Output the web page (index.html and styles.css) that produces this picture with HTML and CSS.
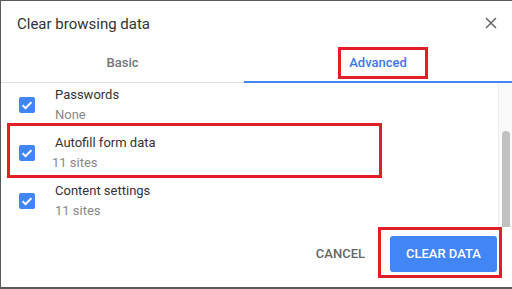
FILE: index.html
```html
<!DOCTYPE html>
<html lang="en">
<head>
<meta charset="utf-8">
<title>Clear browsing data</title>
<link rel="stylesheet" href="styles.css">
</head>
<body>
<div class="dialog">
  <header class="head">
    <h1 class="title">Clear browsing data</h1>
    <button class="close" aria-label="Close">
      <svg width="12" height="12" viewBox="0 0 12 12"><path d="M1 1L11 11M11 1L1 11" stroke="#666" stroke-width="1.5" fill="none"/></svg>
    </button>
  </header>
  <nav class="tabs">
    <div class="tab">Basic</div>
    <div class="tab tab-active"><span class="tab-label">Advanced</span></div>
  </nav>
  <div class="body">
    <ul class="list">
      <li class="row">
        <span class="check"><svg width="16" height="16" viewBox="0 0 16 16"><path d="M3.6 8.3L6.5 11.1L12.4 5.2" stroke="#fff" stroke-width="2" fill="none"/></svg></span>
        <div class="text"><div class="label">Passwords</div><div class="sub">None</div></div>
      </li>
      <li class="row row-marked">
        <span class="check"><svg width="16" height="16" viewBox="0 0 16 16"><path d="M3.6 8.3L6.5 11.1L12.4 5.2" stroke="#fff" stroke-width="2" fill="none"/></svg></span>
        <div class="text"><div class="label">Autofill form data</div><div class="sub sub-shift">11 sites</div></div>
      </li>
      <li class="row">
        <span class="check"><svg width="16" height="16" viewBox="0 0 16 16"><path d="M3.6 8.3L6.5 11.1L12.4 5.2" stroke="#fff" stroke-width="2" fill="none"/></svg></span>
        <div class="text"><div class="label">Content settings</div><div class="sub">11 sites</div></div>
      </li>
    </ul>
    <div class="scrollbar"><div class="thumb"></div></div>
  </div>
  <footer class="foot">
    <button class="btn btn-text">CANCEL</button>
    <button class="btn btn-primary">CLEAR DATA</button>
  </footer>
</div>
</body>
</html>
```
FILE: styles.css
```css
html, body {
  margin: 0;
  height: 100%;
}
body {
  background: #5a5a5a;
  font-family: Roboto, "Liberation Sans", sans-serif;
  overflow: hidden;
}
.dialog {
  margin: 1px 0 0 1px;
  height: 286px;
  background: #fff;
  display: flex;
  flex-direction: column;
}
.head {
  display: flex;
  align-items: center;
  justify-content: space-between;
  padding: 13px 15px 9px 16px;
  height: 20px;
}
.title {
  margin: 0;
  font-size: 15px;
  font-weight: 400;
  line-height: 20px;
  color: #333;
}
.close {
  border: 0;
  background: none;
  padding: 0;
  width: 12px;
  height: 12px;
  margin-top: -2px;
  display: flex;
}
.tabs {
  display: grid;
  grid-template-columns: 243px 1fr;
}
.tab {
  font-size: 13px;
  font-weight: 500;
  line-height: 16px;
  text-align: center;
  padding: 12px 0 11px;
  border-bottom: 1px solid #e0e0e0;
  color: #757575;
}
.tab-active {
  padding-bottom: 10px;
  border-bottom: 2px solid #4285f4;
  color: #3b78e7;
}
.tab-label {
  position: relative;
  display: inline-block;
}
.tab-label::after {
  content: "";
  position: absolute;
  left: -11px;
  right: -21px;
  top: -8px;
  bottom: -8px;
  border: 3px solid #e41e26;
}
.body {
  display: flex;
  height: 144px;
  overflow: hidden;
}
.list {
  flex: 1;
  list-style: none;
  margin: -2px 0 0;
  padding: 0;
}
.row {
  display: flex;
  align-items: center;
  gap: 20px;
  padding: 4px 0 4px 18px;
  position: relative;
}
.row-marked::after {
  content: "";
  position: absolute;
  left: 6px;
  top: -6px;
  width: 375px;
  height: 55px;
  box-sizing: border-box;
  border: 3px solid #e41e26;
}
.check {
  width: 16px;
  height: 16px;
  border-radius: 2px;
  background: #4285f4;
  display: flex;
  flex-shrink: 0;
}
.label {
  font-size: 13px;
  line-height: 20px;
  color: #333;
}
.sub {
  font-size: 13px;
  line-height: 20px;
  color: #888;
}
.sub-shift {
  margin-left: -3px;
}
.scrollbar {
  box-sizing: border-box;
  width: 14px;
  border-left: 1px solid #ececec;
  background: #fafafa;
  display: flex;
  flex-direction: column;
  justify-content: flex-end;
  padding: 0 2px 0 3px;
}
.thumb {
  height: 96px;
  background: #c1c1c1;
  border-radius: 4px 4px 0 0;
}
.foot {
  display: flex;
  justify-content: flex-end;
  align-items: flex-start;
  padding: 9px 15px 0 0;
  flex: 1;
}
.btn {
  font-family: Roboto, "Liberation Sans", sans-serif;
  font-size: 13px;
  font-weight: 500;
  line-height: 36px;
  height: 36px;
  border: 0;
  border-radius: 3px;
  padding: 0 16px;
  background: none;
}
.btn-text {
  color: #666;
  margin-right: 9px;
}
.btn-primary {
  background: #4285f4;
  color: #fff;
  position: relative;
  width: 107px;
  padding: 0;
}
.btn-primary::after {
  content: "";
  position: absolute;
  left: -12px;
  top: -9px;
  width: 124px;
  height: 51px;
  box-sizing: border-box;
  border: 3px solid #e41e26;
}
```
